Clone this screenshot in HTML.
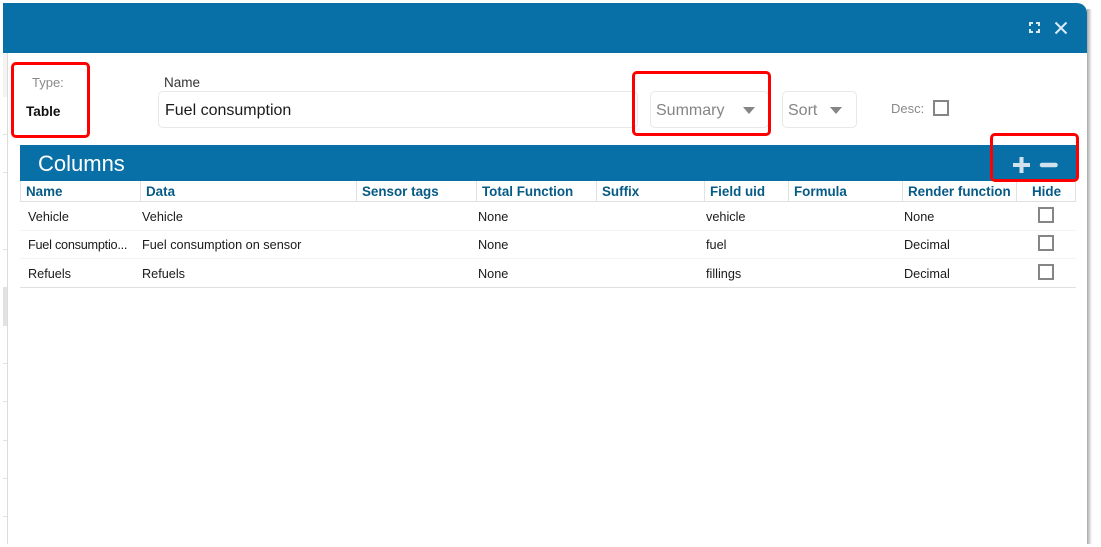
<!DOCTYPE html>
<html><head><meta charset="utf-8"><style>
html,body{margin:0;padding:0;background:#fff}
body{width:1101px;height:547px;position:relative;overflow:hidden;font-family:"Liberation Sans",sans-serif}
.a{position:absolute}
.t{position:absolute;white-space:nowrap;line-height:16px}
.h{font-size:13.4px;font-weight:bold;color:#065a86;top:184px}
.c{font-size:12.7px;color:#1a1a1a}
.sep{position:absolute;top:181px;width:1px;height:20px;background:#e2e2e2}
.cb{position:absolute;width:12px;height:12px;border:2px solid #858585;background:#fff}
.inp{position:absolute;top:91px;height:35px;border:1px solid #e8e8e8;border-radius:5px;background:#fff}
.red{position:absolute;border:3px solid #fe0000;border-radius:5px;box-sizing:border-box}
.tick{position:absolute;left:3px;width:4px;height:1px;background:#e4e4e4}
.arr{position:absolute;width:0;height:0;border-left:6.500px solid transparent;border-right:6.500px solid transparent;border-top:7px solid #858585}
</style></head><body>
<div class="a" style="left:3px;top:53px;width:4px;height:44px;background:#f3f3f3"></div>
<div class="tick" style="top:134px"></div><div class="tick" style="top:172px"></div><div class="tick" style="top:249px"></div>
<div class="a" style="left:3px;top:287px;width:4px;height:39px;background:#e2e2e2"></div>
<div class="tick" style="top:363px"></div><div class="tick" style="top:401px"></div><div class="tick" style="top:440px"></div><div class="tick" style="top:478px"></div><div class="tick" style="top:516px"></div>
<div class="a" style="left:7px;top:53px;width:1px;height:491px;background:#dcdcdc"></div>
<div class="a" style="left:1087px;top:9px;width:5px;height:535px;background:linear-gradient(90deg,#a8a8a8,#d4d4d4 50%,#fff)"></div>
<div class="a" style="left:3px;top:3px;width:1084px;height:50px;background:#0870a6;border-top-right-radius:10px"></div>

<svg class="a" style="left:1029px;top:22px" width="11" height="11" viewBox="0 0 11 11" fill="none" stroke="#dcebf3" stroke-width="2"><path d="M1 4V1H4M7 1H10V4M10 7V10H7M4 10H1V7"/></svg>
<svg class="a" style="left:1054px;top:21px" width="14" height="14" viewBox="0 0 14 14" fill="none" stroke="#dcebf3" stroke-width="2"><path d="M1.500 1.500L12.500 12.500M12.500 1.500L1.500 12.500"/></svg>

<div class="t" style="left:32px;top:75px;font-size:13px;color:#8a8a8a">Type:</div>
<div class="t" style="left:26px;top:104px;font-size:13.600px;font-weight:bold;color:#111">Table</div>
<div class="t" style="left:164px;top:75px;font-size:13.500px;color:#333">Name</div>

<div class="inp" style="left:158px;width:478px"></div>
<div class="t" style="left:165px;top:103px;font-size:16px;color:#1a1a1a">Fuel consumption</div>
<div class="inp" style="left:650px;width:117px"></div>
<div class="t" style="left:656px;top:103px;font-size:16px;color:#858585">Summary</div>
<div class="arr" style="left:743px;top:107px"></div>
<div class="inp" style="left:782px;width:73px"></div>
<div class="t" style="left:788px;top:103px;font-size:16px;color:#858585">Sort</div>
<div class="arr" style="left:830px;top:107px"></div>
<div class="t" style="left:891px;top:101px;font-size:13px;color:#8a8a8a">Desc:</div>
<div class="cb" style="left:933px;top:100px"></div>

<div class="a" style="left:20px;top:145px;width:1056px;height:36px;background:#0870a6"></div>
<div class="t" style="left:38px;top:152px;font-size:22px;line-height:24px;color:#fff">Columns</div>
<svg class="a" style="left:1012px;top:156px" width="48" height="18" viewBox="0 0 48 18"><path d="M1 9H18M9.500 1V17" stroke="#cfe2ee" stroke-width="4" fill="none"/><path d="M30 9H43.500" stroke="#cfe2ee" stroke-width="4.500" stroke-linecap="round" fill="none"/></svg>

<div class="a" style="left:20px;top:201px;width:1056px;height:1px;background:#e0e0e0"></div>
<div class="sep" style="left:20px"></div><div class="sep" style="left:140px"></div><div class="sep" style="left:356px"></div><div class="sep" style="left:476px"></div><div class="sep" style="left:596px"></div><div class="sep" style="left:704px"></div><div class="sep" style="left:788px"></div><div class="sep" style="left:902px"></div><div class="sep" style="left:1016px"></div><div class="sep" style="left:1075px"></div>
<div class="t h" style="left:26px">Name</div>
<div class="t h" style="left:146px">Data</div>
<div class="t h" style="left:362px">Sensor tags</div>
<div class="t h" style="left:482px">Total Function</div>
<div class="t h" style="left:602px">Suffix</div>
<div class="t h" style="left:710px">Field uid</div>
<div class="t h" style="left:794px">Formula</div>
<div class="t h" style="left:908px">Render function</div>
<div class="t h" style="left:1032px">Hide</div>

<div class="t c" style="left:28px;top:209px">Vehicle</div>
<div class="t c" style="left:142px;top:209px">Vehicle</div>
<div class="t c" style="left:478px;top:209px">None</div>
<div class="t c" style="left:706px;top:209px">vehicle</div>
<div class="t c" style="left:904px;top:209px">None</div>
<div class="cb" style="left:1038px;top:207px"></div>
<div class="a" style="left:20px;top:230px;width:1056px;height:1px;background:#f4f4f4"></div>

<div class="t c" style="left:28px;top:237px;letter-spacing:-.25px">Fuel consumptio...</div>
<div class="t c" style="left:142px;top:237px">Fuel consumption on sensor</div>
<div class="t c" style="left:478px;top:237px">None</div>
<div class="t c" style="left:706px;top:237px">fuel</div>
<div class="t c" style="left:904px;top:237px">Decimal</div>
<div class="cb" style="left:1038px;top:235px"></div>
<div class="a" style="left:20px;top:258px;width:1056px;height:1px;background:#f4f4f4"></div>

<div class="t c" style="left:28px;top:266px">Refuels</div>
<div class="t c" style="left:142px;top:266px">Refuels</div>
<div class="t c" style="left:478px;top:266px">None</div>
<div class="t c" style="left:706px;top:266px">fillings</div>
<div class="t c" style="left:904px;top:266px">Decimal</div>
<div class="cb" style="left:1038px;top:264px"></div>
<div class="a" style="left:20px;top:287px;width:1056px;height:1px;background:#e0e0e0"></div>

<div class="red" style="left:11px;top:62px;width:79px;height:76px"></div>
<div class="red" style="left:632px;top:71px;width:139px;height:65px"></div>
<div class="red" style="left:990px;top:133px;width:89px;height:49px"></div>
</body></html>
